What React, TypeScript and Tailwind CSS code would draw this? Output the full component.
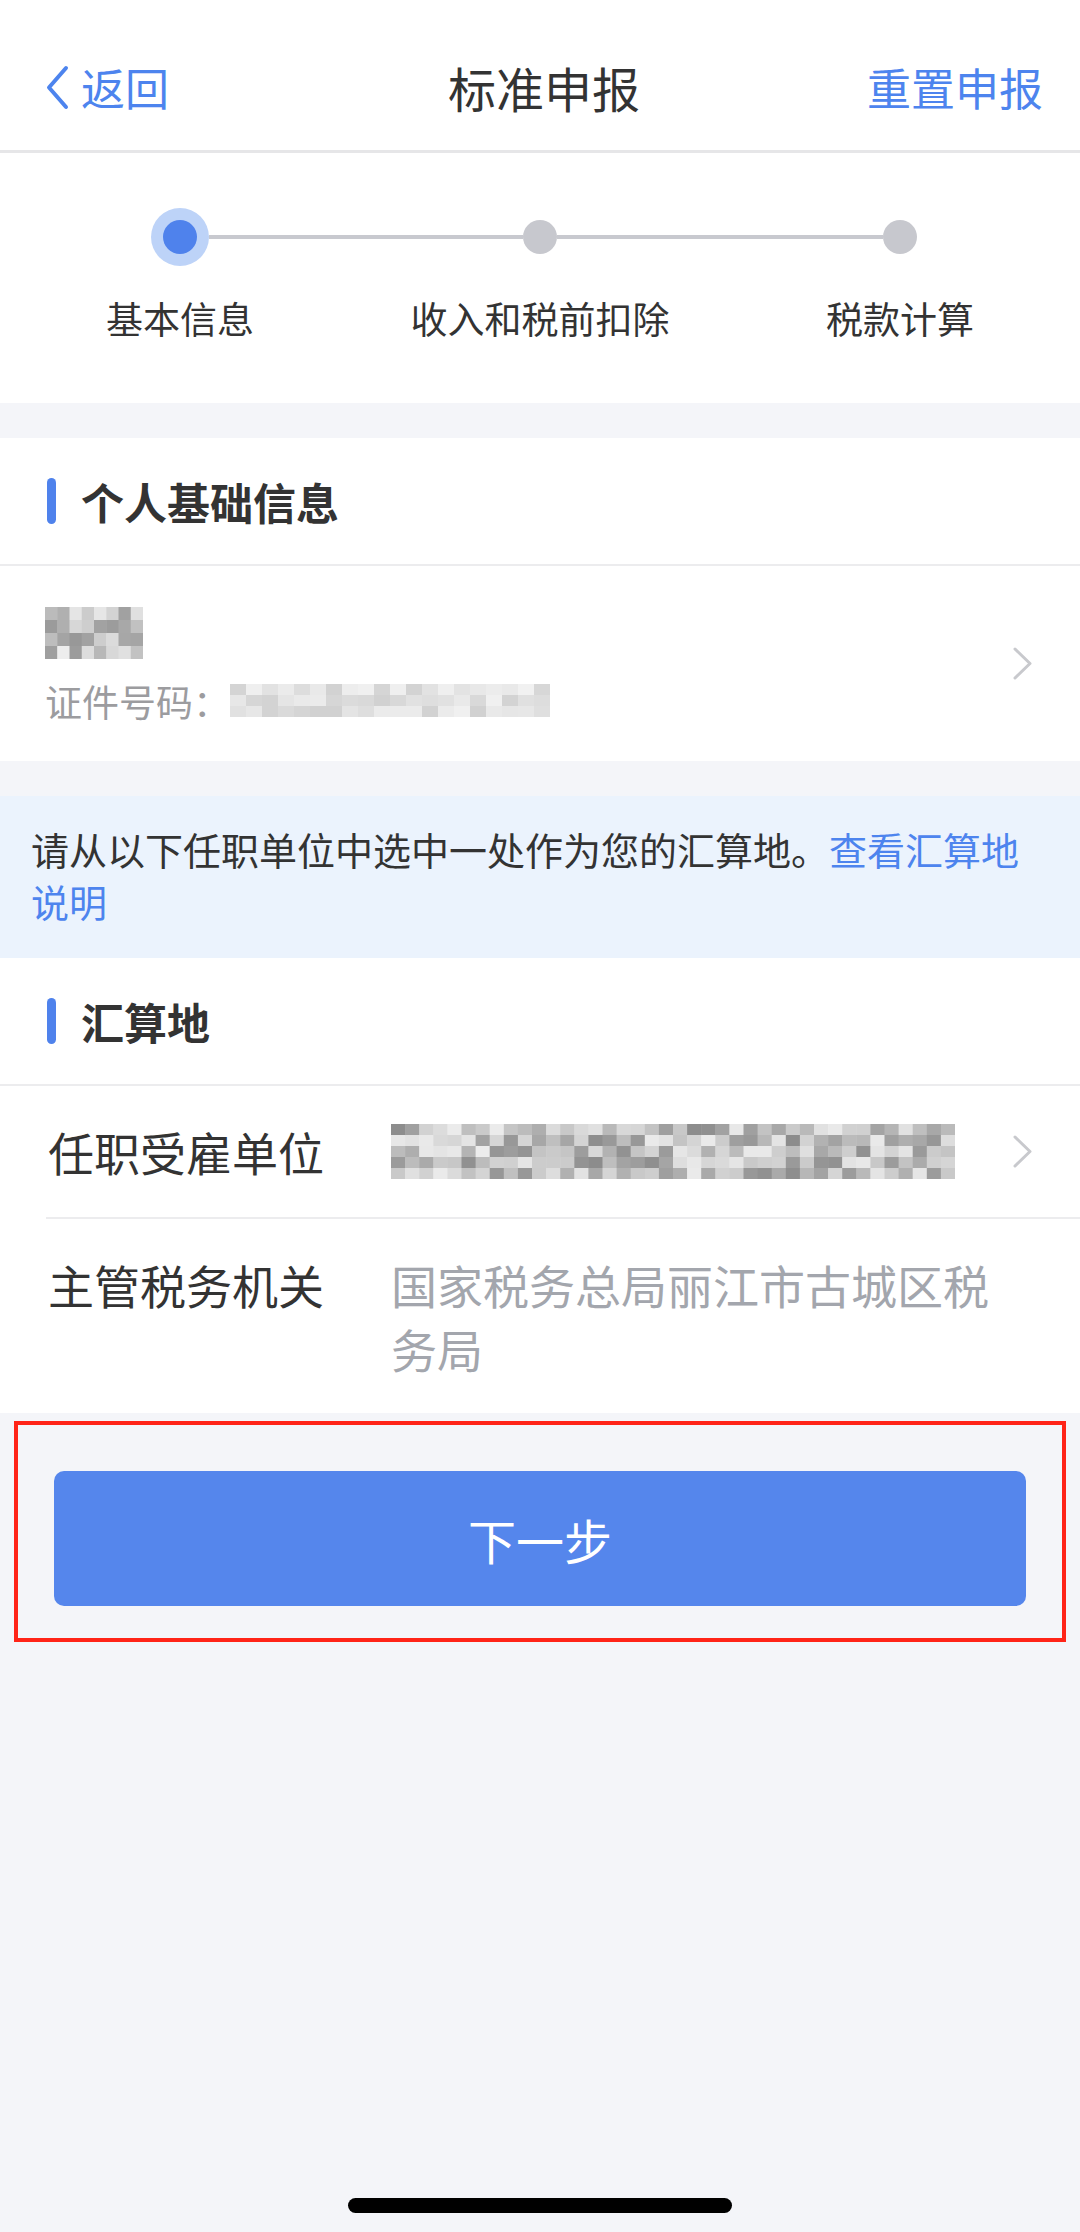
import React from "react";

// 马赛克（打码区域）
function Mosaic({
  w,
  h,
  cols,
  rows,
  min,
  max,
  seed,
}: {
  w: number;
  h: number;
  cols: number;
  rows: number;
  min: number;
  max: number;
  seed: number;
}) {
  const cw = w / cols;
  const rh = h / rows;
  const rnd = (i: number) => {
    const x = Math.sin(i * 12.9898 + seed * 78.233) * 43758.5453;
    return x - Math.floor(x);
  };
  const cells = [];
  for (let r = 0; r < rows; r++) {
    for (let c = 0; c < cols; c++) {
      const v = Math.round(min + (max - min) * rnd(r * cols + c + 1));
      cells.push(
        <rect
          key={`${r}-${c}`}
          x={c * cw}
          y={r * rh}
          width={cw + 0.5}
          height={rh + 0.5}
          fill={`rgb(${v},${v},${v})`}
        />,
      );
    }
  }
  return (
    <svg width={w} height={h} viewBox={`0 0 ${w} ${h}`} className="block shrink-0">
      {cells}
    </svg>
  );
}

function ChevronRight() {
  return (
    <svg width="21" height="33" viewBox="0 0 21 33" fill="none" className="shrink-0">
      <path d="M3 2 L18 16.5 L3 31" stroke="#c8c9cd" strokeWidth="3" strokeLinecap="round" strokeLinejoin="round" />
    </svg>
  );
}

function SectionHeader({ title }: { title: string }) {
  return (
    <div className="h-[128px] flex items-center pl-[47px] border-b-[2px] border-[#ececee]">
      <div className="w-[9px] h-[46px] rounded-full bg-[#4f82ec]" />
      <span className="ml-[25px] text-[43px] font-bold text-[#333]">{title}</span>
    </div>
  );
}

const steps = ["基本信息", "收入和税前扣除", "税款计算"];

export default function App() {
  return (
    <div className="min-h-[2232px] w-[1080px] bg-[#f4f5f9] flex flex-col font-['Noto_Sans_CJK_SC','Liberation_Sans',sans-serif]">
      {/* 顶部导航 */}
      <header className="h-[153px] bg-white border-b-[3px] border-[#e6e6e8] flex items-center pt-[24px]">
        <div className="flex-1 flex items-center pl-[45px] gap-[12px] text-[#4d84ee]">
          <svg width="24" height="45" viewBox="0 0 24 45" fill="none">
            <path d="M21 3 L4 22.5 L21 42" stroke="#4d84ee" strokeWidth="4" strokeLinecap="round" strokeLinejoin="round" />
          </svg>
          <span className="text-[44px]">返回</span>
        </div>
        <h1 className="text-[48px] text-[#333]">标准申报</h1>
        <div className="flex-1 flex justify-end pr-[37px]">
          <span className="text-[44px] text-[#4d84ee]">重置申报</span>
        </div>
      </header>

      {/* 步骤条 */}
      <div className="bg-white pt-[55px] pb-[63px] grid grid-cols-3">
        {steps.map((s, i) => (
          <div key={s} className="flex flex-col items-center">
            <div className="flex items-center w-full h-[58px]">
              <div className={i === 0 ? "flex-1 h-[4px]" : "flex-1 h-[4px] bg-[#c8c9cf]"} />
              {i === 0 ? (
                <div className="w-[58px] h-[58px] rounded-full bg-[#bdd3f8] flex items-center justify-center">
                  <div className="w-[34px] h-[34px] rounded-full bg-[#4f82ec]" />
                </div>
              ) : (
                <div className="w-[34px] h-[34px] rounded-full bg-[#c7c8ce]" />
              )}
              <div className={i === 2 ? "flex-1 h-[4px]" : "flex-1 h-[4px] bg-[#c8c9cf]"} />
            </div>
            <span className="mt-[30px] text-[37px] leading-[44px] text-[#333]">{s}</span>
          </div>
        ))}
      </div>

      <div className="h-[35px]" />

      {/* 个人基础信息 */}
      <section className="bg-white">
        <SectionHeader title="个人基础信息" />
        <div className="h-[195px] flex items-center pl-[45px] pr-[47px]">
          <div className="flex-1 flex flex-col">
            <Mosaic w={98} h={52} cols={8} rows={4} min={150} max={238} seed={3} />
            <div className="mt-[22px] flex items-center">
              <span className="text-[37px] leading-[40px] text-[#9c9c9f]">证件号码：</span>
              <Mosaic w={320} h={33} cols={20} rows={3} min={208} max={242} seed={7} />
            </div>
          </div>
          <ChevronRight />
        </div>
      </section>

      <div className="h-[35px]" />

      {/* 提示 */}
      <div className="bg-[#ebf3fd] pl-[31px] pr-[40px] pt-[27px] pb-[31px] text-[38px] leading-[52px] text-[#333]">
        <span>请从以下任职单位中选中一处作为您的汇算地。</span>
        <span className="text-[#4d84ee]">查看汇算地</span>
        <span className="text-[#4d84ee]">说明</span>
      </div>

      {/* 汇算地 */}
      <section className="bg-white">
        <SectionHeader title="汇算地" />
        <div className="h-[131px] flex items-center pl-[48px] pr-[47px]">
          <span className="w-[343px] shrink-0 text-[46px] text-[#333]">任职受雇单位</span>
          <Mosaic w={564} h={55} cols={40} rows={5} min={140} max={236} seed={11} />
          <div className="flex-1" />
          <ChevronRight />
        </div>
        <div className="ml-[46px] h-[2px] bg-[#ececee]" />
        <div className="flex items-start pl-[48px] pr-[60px] pt-[33px] pb-[33px]">
          <span className="w-[343px] shrink-0 text-[46px] leading-[64px] text-[#333]">主管税务机关</span>
          <span className="flex-1 text-[46px] leading-[64px] text-[#a3a6ad]">国家税务总局丽江市古城区税务局</span>
        </div>
      </section>

      {/* 下一步 */}
      <div className="mx-[14px] mt-[8px] border-[4px] border-[#ff2418] px-[36px] pt-[46px] pb-[32px]">
        <button className="w-full h-[135px] rounded-[10px] bg-[#5586ec] text-white text-[48px]">下一步</button>
      </div>

      <div className="flex-1" />
      <div className="w-[384px] h-[15px] rounded-full bg-black mx-auto mb-[19px]" />
    </div>
  );
}
